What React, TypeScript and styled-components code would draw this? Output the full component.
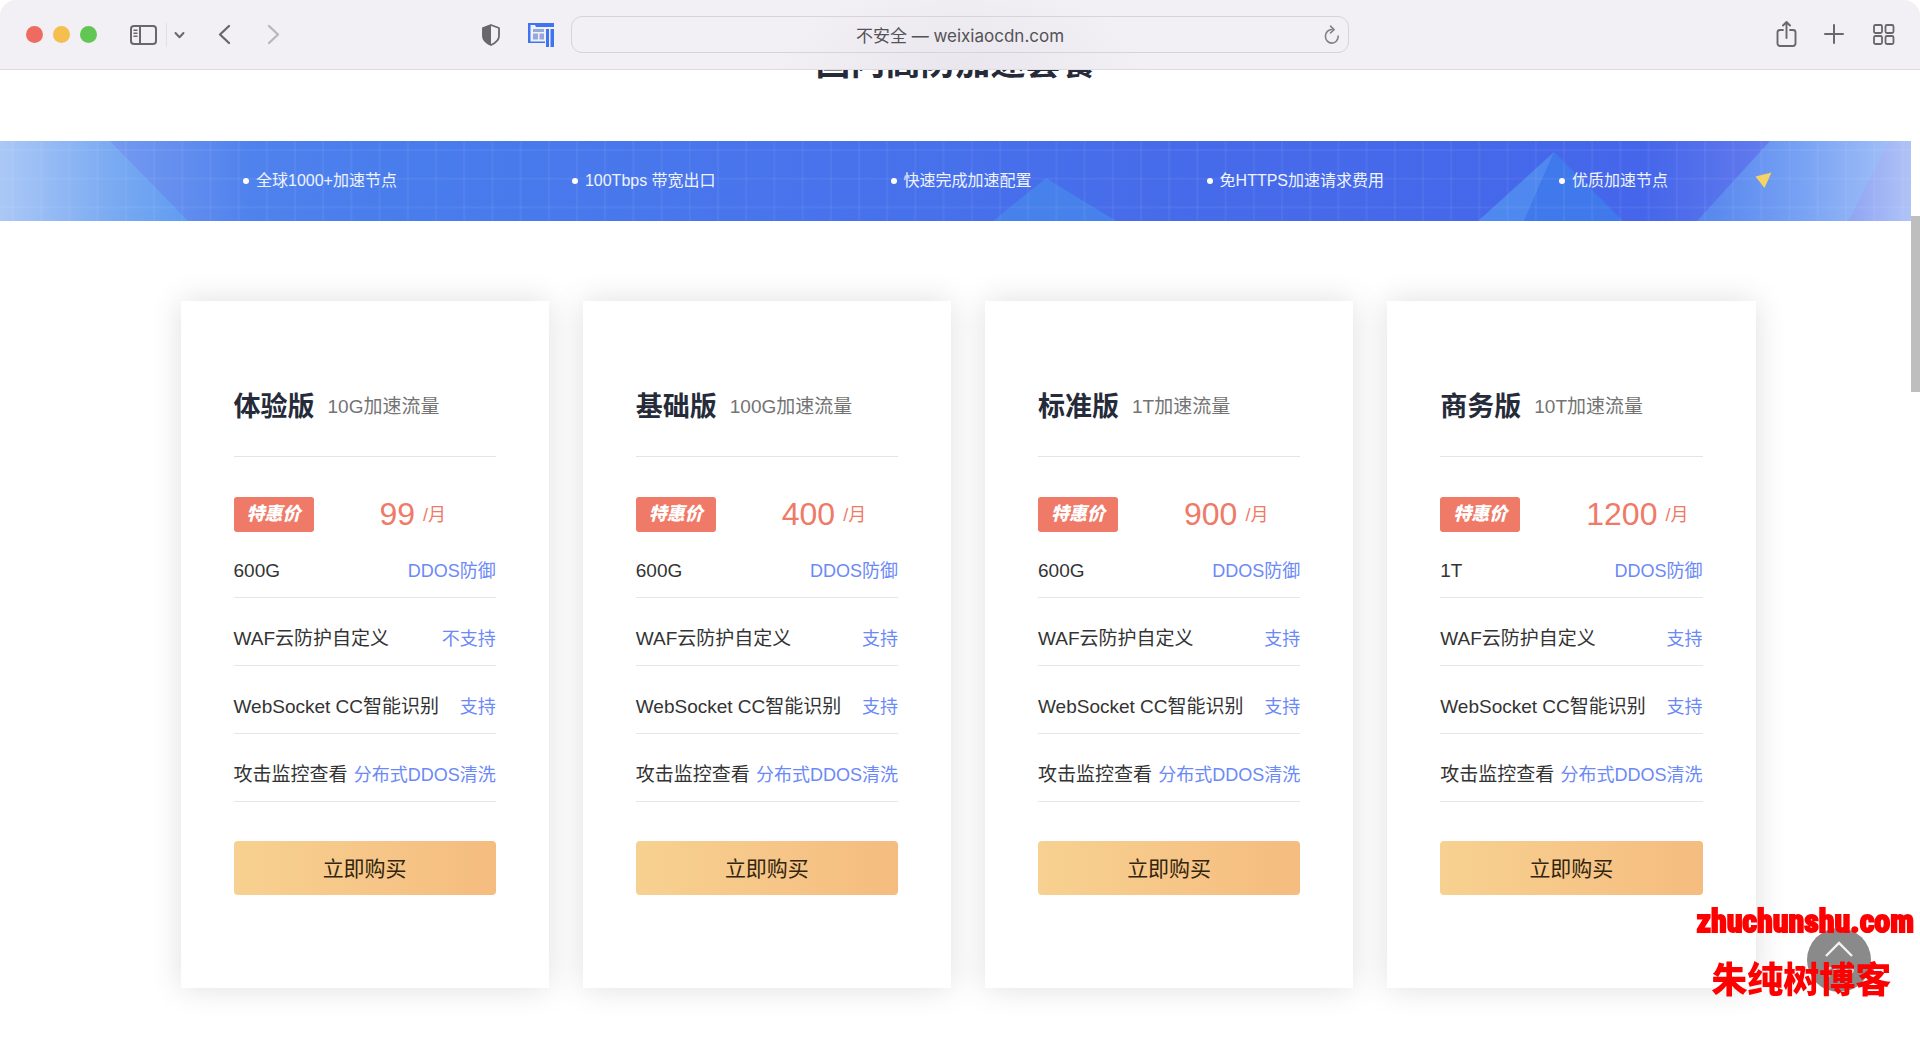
import React from "react";
import styled, { createGlobalStyle } from "styled-components";

const sans = `"Liberation Sans", "Noto Sans CJK SC", sans-serif`;

const GlobalStyle = createGlobalStyle`
  * { box-sizing: border-box; }
  html, body { margin: 0; padding: 0; background: #fff; }
  body { font-family: ${sans}; color: #333; }
  h1, h2, ul, p { margin: 0; padding: 0; }
  ul { list-style: none; }
  button { border: 0; padding: 0; background: none; font-family: inherit; cursor: pointer; }
`;

const Window = styled.div`
  height: 100vh;
  display: flex;
  flex-direction: column;
  overflow: hidden;
`;

/* ---------- browser toolbar ---------- */

const Toolbar = styled.header`
  flex: none;
  position: relative;
  z-index: 2;
  height: 70px;
  display: grid;
  grid-template-columns: 1fr minmax(0, 778px) 1fr;
  align-items: center;
  border-bottom: 1px solid #dddbe0;
  border-radius: 16px 16px 0 0;
  background: radial-gradient(ellipse 190px 90px at 50% 100%, #e9e7ed, #f2f0f5);
`;

const ToolbarSide = styled.div<{ $end?: boolean }>`
  display: flex;
  align-items: center;
  justify-content: ${(p) => (p.$end ? "flex-end" : "flex-start")};
  gap: ${(p) => (p.$end ? "24px" : "0")};
  padding: ${(p) => (p.$end ? "0 23px 0 0" : "0 16px 0 26px")};
`;

const Lights = styled.div`
  display: flex;
  gap: 10px;
  margin-right: 33px;
`;

const Light = styled.button<{ $color: string }>`
  width: 17px;
  height: 17px;
  border-radius: 50%;
  background: ${(p) => p.$color};
`;

const IconButton = styled.button`
  display: flex;
  align-items: center;
  justify-content: center;
  height: 28px;
  color: #69676c;
  svg { display: block; }
`;

const MenuSplit = styled.div`
  display: flex;
  align-items: center;
  margin-right: 32px;
`;

const Divider = styled.span`
  width: 1px;
  height: 24px;
  margin: 0 7px 0 9px;
  background: #e2e0e5;
`;

const NavButtons = styled.div`
  display: flex;
  gap: 32px;
`;

const Extensions = styled.div`
  display: flex;
  gap: 26px;
  margin-left: auto;
`;

const AddressBar = styled.form`
  display: grid;
  grid-template-columns: 32px 1fr 32px;
  align-items: center;
  height: 37px;
  border: 1px solid #d6d4d9;
  border-radius: 11px;
`;

const AddressInput = styled.input`
  grid-column: 2;
  width: 100%;
  border: 0;
  outline: 0;
  background: transparent;
  text-align: center;
  color: #545257;
  font: 17px Inter, "Noto Sans CJK SC", sans-serif;
`;

/* ---------- page ---------- */

const Viewport = styled.div`
  flex: 1;
  min-height: 0;
  display: flex;
`;

const Page = styled.main`
  flex: 1;
  min-width: 0;
`;

const ScrollTrack = styled.div`
  flex: none;
  width: 9px;
  padding-top: 146px;
`;

const ScrollThumb = styled.div`
  height: 176px;
  background: #bebebe;
`;

const Heading = styled.h1`
  margin-top: -28px;
  font-size: 35px;
  line-height: 42px;
  text-align: center;
  color: #262b3a;
`;

const Banner = styled.section`
  position: relative;
  height: 80px;
  margin-top: 57px;
`;

const BannerArt = styled.svg`
  position: absolute;
  inset: 0;
  width: 100%;
  height: 100%;
`;

const FeatureList = styled.ul`
  position: relative;
  max-width: 1600px;
  height: 100%;
  margin: 0 auto;
  display: flex;
  align-items: center;
  justify-content: space-around;
`;

const Feature = styled.li`
  display: flex;
  align-items: center;
  gap: 7px;
  font-size: 16px;
  line-height: 24px;
  color: #eef3ff;
  white-space: nowrap;
  &::before {
    content: "";
    width: 6px;
    height: 6px;
    border-radius: 50%;
    background: #fff;
  }
`;

const Plans = styled.section`
  max-width: 1600px;
  margin: 80px auto 0;
  padding-left: 25px;
  display: grid;
  grid-template-columns: repeat(4, 1fr);
  gap: 34px;
`;

const Card = styled.article`
  min-width: 0;
  padding: 86px 53px 93px;
  background: #fff;
  box-shadow: 0 0 30px rgba(0, 0, 0, 0.13);
`;

const CardHead = styled.div`
  display: flex;
  align-items: center;
  gap: 13px;
  padding-bottom: 29px;
  border-bottom: 1px solid #e4e4e4;
`;

const PlanName = styled.h2`
  font-size: 27px;
  line-height: 40px;
  color: #262b3a;
  white-space: nowrap;
`;

const Traffic = styled.span`
  font-size: 19px;
  line-height: 28px;
  color: #737373;
  white-space: nowrap;
`;

const PriceRow = styled.div`
  display: flex;
  align-items: center;
  gap: 66px;
  height: 35px;
  margin-top: 40px;
  color: #ee7a67;
`;

const SaleTag = styled.span`
  width: 80px;
  border-radius: 3px;
  background: #ee7a67;
  color: #fff;
  font-size: 18px;
  font-weight: 900;
  font-style: italic;
  line-height: 35px;
  text-align: center;
`;

const Price = styled.p`
  display: flex;
  align-items: center;
  gap: 8px;
  font-size: 32px;
  line-height: 35px;
  white-space: nowrap;
`;

const Unit = styled.span`
  font-size: 18px;
  line-height: 28px;
`;

const Specs = styled.ul`
  display: grid;
  gap: 27px;
  margin-top: 25px;
`;

const Spec = styled.li`
  display: flex;
  justify-content: space-between;
  padding-bottom: 12px;
  border-bottom: 1px solid #e6e6e6;
  line-height: 28px;
  white-space: nowrap;
`;

const SpecLabel = styled.span`
  font-size: 19px;
`;

const SpecValue = styled.span`
  font-size: 18px;
  color: #6b89f7;
`;

const BuyButton = styled.button`
  display: block;
  width: 100%;
  height: 54px;
  margin-top: 39px;
  padding-bottom: 3px;
  border-radius: 4px;
  background: linear-gradient(90deg, #f7d191, #f5bc7f);
  color: #32240d;
  font-size: 21px;
`;

/* ---------- floating parts ---------- */

const TopButton = styled.button`
  position: fixed;
  right: 49px;
  bottom: 53px;
  width: 64px;
  height: 64px;
  border-radius: 50%;
  background: #8a8a8a;
  color: #d8d8d8;
  display: flex;
  flex-direction: column;
  align-items: center;
  gap: 7px;
  padding-top: 13px;
  font-size: 15px;
  font-weight: bold;
  line-height: 16px;
`;

const Watermark = styled.aside`
  position: fixed;
  z-index: 3;
  right: 6px;
  bottom: 50px;
  display: flex;
  flex-direction: column;
  align-items: center;
  gap: 20px;
  color: #fe0000;
  font-weight: bold;
  pointer-events: none;
`;

const SiteName = styled.span`
  font-family: "Liberation Sans Narrow", "Roboto Condensed", "Liberation Sans", sans-serif;
  font-size: 32px;
  line-height: 36px;
  -webkit-text-stroke: 2px #fe0000;
`;

const BlogName = styled.span`
  padding-right: 8px;
  font-family: "Noto Sans CJK SC", sans-serif;
  font-size: 36px;
  font-weight: 900;
  line-height: 36px;
`;

const features = ["全球1000+加速节点", "100Tbps 带宽出口", "快速完成加速配置", "免HTTPS加速请求费用", "优质加速节点"];

const plans = [
  { name: "体验版", traffic: "10G加速流量", price: "99", defence: "600G", waf: "不支持" },
  { name: "基础版", traffic: "100G加速流量", price: "400", defence: "600G", waf: "支持" },
  { name: "标准版", traffic: "1T加速流量", price: "900", defence: "600G", waf: "支持" },
  { name: "商务版", traffic: "10T加速流量", price: "1200", defence: "1T", waf: "支持" },
];

const line = {
  fill: "none",
  stroke: "currentColor",
  strokeWidth: 2,
  strokeLinecap: "round" as const,
  strokeLinejoin: "round" as const,
};

function BrowserToolbar() {
  return (
    <Toolbar>
      <ToolbarSide>
        <Lights>
          <Light $color="#ed6b60" aria-label="关闭" />
          <Light $color="#f5bf4f" aria-label="最小化" />
          <Light $color="#62c655" aria-label="缩放" />
        </Lights>
        <MenuSplit>
          <IconButton aria-label="边栏">
            <svg width="27" height="20" viewBox="0 0 27 20" {...line}>
              <rect x="1" y="1" width="25" height="18" rx="3" />
              <path d="M10 1v18" />
              <path d="M4 5.3h3M4 8.3h3M4 11.3h3" strokeWidth="1.4" />
            </svg>
          </IconButton>
          <Divider />
          <IconButton aria-label="标签页组">
            <svg width="11" height="8" viewBox="0 0 11 8" {...line}>
              <path d="M1.5 2l4 4.2 4-4.2" />
            </svg>
          </IconButton>
        </MenuSplit>
        <NavButtons>
          <IconButton aria-label="后退">
            <svg width="16" height="22" viewBox="0 0 16 22" {...line} strokeWidth="2.3">
              <path d="M12 2L3 10.500l9 8.500" />
            </svg>
          </IconButton>
          <IconButton aria-label="前进">
            <svg width="16" height="22" viewBox="0 0 16 22" {...line} stroke="#b8b6bb" strokeWidth="2.3">
              <path d="M4 2l9 8.500-9 8.500" />
            </svg>
          </IconButton>
        </NavButtons>
        <Extensions>
          <IconButton aria-label="隐私报告">
            <svg width="20" height="24" viewBox="0 0 20 24">
              <path d="M10 2l8 3v8c0 4-3.500 7-8 9-4.500-2-8-5-8-9V5z" fill="none" stroke="currentColor" strokeWidth="1.800" strokeLinejoin="round" />
              <path d="M10 1.500L1.500 5v8c0 4 3.500 7.500 8.500 9.500z" fill="currentColor" />
            </svg>
          </IconButton>
          <IconButton aria-label="扩展">
            <svg width="28" height="26" viewBox="0 0 28 26">
              <path d="M2 1h25v4H9L8 3H3.500v16.500H18V21H1V1z" fill="#3f74f0" />
              <path d="M6 7h11v3H6zM6 11.500h5v6H6zM12.500 11.500H17v6h-4.500z" fill="#93a9dc" />
              <path d="M19 7h3v18h-3zM23.500 7H27v18h-3.500z" fill="#3f74f0" />
            </svg>
          </IconButton>
        </Extensions>
      </ToolbarSide>
      <AddressBar>
        <AddressInput aria-label="地址" readOnly value="不安全 — weixiaocdn.com" />
        <IconButton type="button" aria-label="重新载入">
          <svg width="18" height="20" viewBox="0 0 18 20" {...line} stroke="#838186" strokeWidth="1.600">
            <path d="M9 4.500A6.400 6.800 0 1 0 15.200 11" />
            <path d="M7.500 1.200l3.600 3.400L7.500 8" />
          </svg>
        </IconButton>
      </AddressBar>
      <ToolbarSide $end>
        <IconButton aria-label="共享">
          <svg width="24" height="28" viewBox="0 1 24 28" {...line} strokeWidth="1.900">
            <path d="M8 10H5A2.500 2.500 0 0 0 2.500 12.500v11A2.500 2.500 0 0 0 5 26h13a2.500 2.500 0 0 0 2.500-2.500v-11a2.500 2.500 0 0 0-2.500-2.500H15" />
            <path d="M11.500 18V2.500M8 5.500L11.500 2l3.500 3.500" />
          </svg>
        </IconButton>
        <IconButton aria-label="新建标签页">
          <svg width="24" height="22" viewBox="0 1 24 22" {...line}>
            <path d="M11 2v18M2 11h18" />
          </svg>
        </IconButton>
        <IconButton aria-label="标签页概览">
          <svg width="26" height="22" viewBox="0 1 26 22" {...line} strokeWidth="1.800">
            <rect x="3" y="2" width="8" height="8" rx="1.500" />
            <rect x="14.500" y="2" width="8" height="8" rx="1.500" />
            <rect x="3" y="13" width="8" height="8" rx="1.500" />
            <rect x="14.500" y="13" width="8" height="8" rx="1.500" />
          </svg>
        </IconButton>
      </ToolbarSide>
    </Toolbar>
  );
}

function BannerBackground() {
  return (
    <BannerArt viewBox="0 0 1911 80" preserveAspectRatio="none" aria-hidden="true">
      <defs>
        <linearGradient id="base" gradientUnits="userSpaceOnUse" x1="0" y1="0" x2="1911" y2="0">
          <stop offset="0" stopColor="#9dbcf5" />
          <stop offset="0.06" stopColor="#7499f0" />
          <stop offset="0.13" stopColor="#5082ed" />
          <stop offset="0.2" stopColor="#497dec" />
          <stop offset="0.4" stopColor="#4874ec" />
          <stop offset="0.62" stopColor="#466bea" />
          <stop offset="0.86" stopColor="#4566ea" />
          <stop offset="0.92" stopColor="#6079ed" />
          <stop offset="1" stopColor="#b0c3f7" />
        </linearGradient>
        <linearGradient id="left" gradientUnits="userSpaceOnUse" x1="0" y1="0" x2="188" y2="0">
          <stop offset="0" stopColor="#abc8f6" />
          <stop offset="0.6" stopColor="#7aaaf2" />
          <stop offset="1" stopColor="#609cf1" />
        </linearGradient>
        <linearGradient id="right" gradientUnits="userSpaceOnUse" x1="1697" y1="0" x2="1889" y2="0">
          <stop offset="0" stopColor="#5585ee" />
          <stop offset="0.5" stopColor="#749ff3" />
          <stop offset="1" stopColor="#9fbef7" />
        </linearGradient>
        <pattern id="grid" patternUnits="userSpaceOnUse" x="12" y="8" width="28.2" height="28.7">
          <path d="M0 0h2v28.700H0z" fill="#fff" fillOpacity="0.05" />
          <path d="M0 0h28.200v2H0z" fill="#fff" fillOpacity="0.05" />
        </pattern>
      </defs>
      <rect width="1911" height="80" fill="url(#base)" />
      <path d="M0 0h110l78 80H0z" fill="url(#left)" />
      <path d="M1046 37l70 43H993z" fill="#4781eb" />
      <path d="M1554 11l69 69h-99z" fill="#4079eb" />
      <path d="M1554 11l-30 69h-46z" fill="#4f88ee" />
      <path d="M1770 0h119l-41 80h-151z" fill="url(#right)" />
      <rect width="1911" height="80" fill="url(#grid)" />
      <path d="M1755.500 35.500l16-4-7 15.500z" fill="#f5d364" />
    </BannerArt>
  );
}

function PlanCard({ plan }: { plan: (typeof plans)[number] }) {
  const specs = [
    [plan.defence, "DDOS防御"],
    ["WAF云防护自定义", plan.waf],
    ["WebSocket CC智能识别", "支持"],
    ["攻击监控查看", "分布式DDOS清洗"],
  ];
  return (
    <Card>
      <CardHead>
        <PlanName>{plan.name}</PlanName>
        <Traffic>{plan.traffic}</Traffic>
      </CardHead>
      <PriceRow>
        <SaleTag>特惠价</SaleTag>
        <Price>
          {plan.price}
          <Unit>/月</Unit>
        </Price>
      </PriceRow>
      <Specs>
        {specs.map(([label, value]) => (
          <Spec key={label}>
            <SpecLabel>{label}</SpecLabel>
            <SpecValue>{value}</SpecValue>
          </Spec>
        ))}
      </Specs>
      <BuyButton>立即购买</BuyButton>
    </Card>
  );
}

export default function App() {
  return (
    <>
      <GlobalStyle />
      <Window>
        <BrowserToolbar />
        <Viewport>
          <Page>
            <Heading>国内高防加速套餐</Heading>
            <Banner>
              <BannerBackground />
              <FeatureList>
                {features.map((text) => (
                  <Feature key={text}>{text}</Feature>
                ))}
              </FeatureList>
            </Banner>
            <Plans>
              {plans.map((plan) => (
                <PlanCard key={plan.name} plan={plan} />
              ))}
            </Plans>
          </Page>
          <ScrollTrack>
            <ScrollThumb />
          </ScrollTrack>
        </Viewport>
      </Window>
      <TopButton>
        <svg width="30" height="16" viewBox="0 0 30 16" fill="none" stroke="#f2f2f2" strokeWidth="2.400">
          <path d="M2 15L15 2l13 13" />
        </svg>
        TOP
      </TopButton>
      <Watermark>
        <SiteName>zhuchunshu.com</SiteName>
        <BlogName>朱纯树博客</BlogName>
      </Watermark>
    </>
  );
}
